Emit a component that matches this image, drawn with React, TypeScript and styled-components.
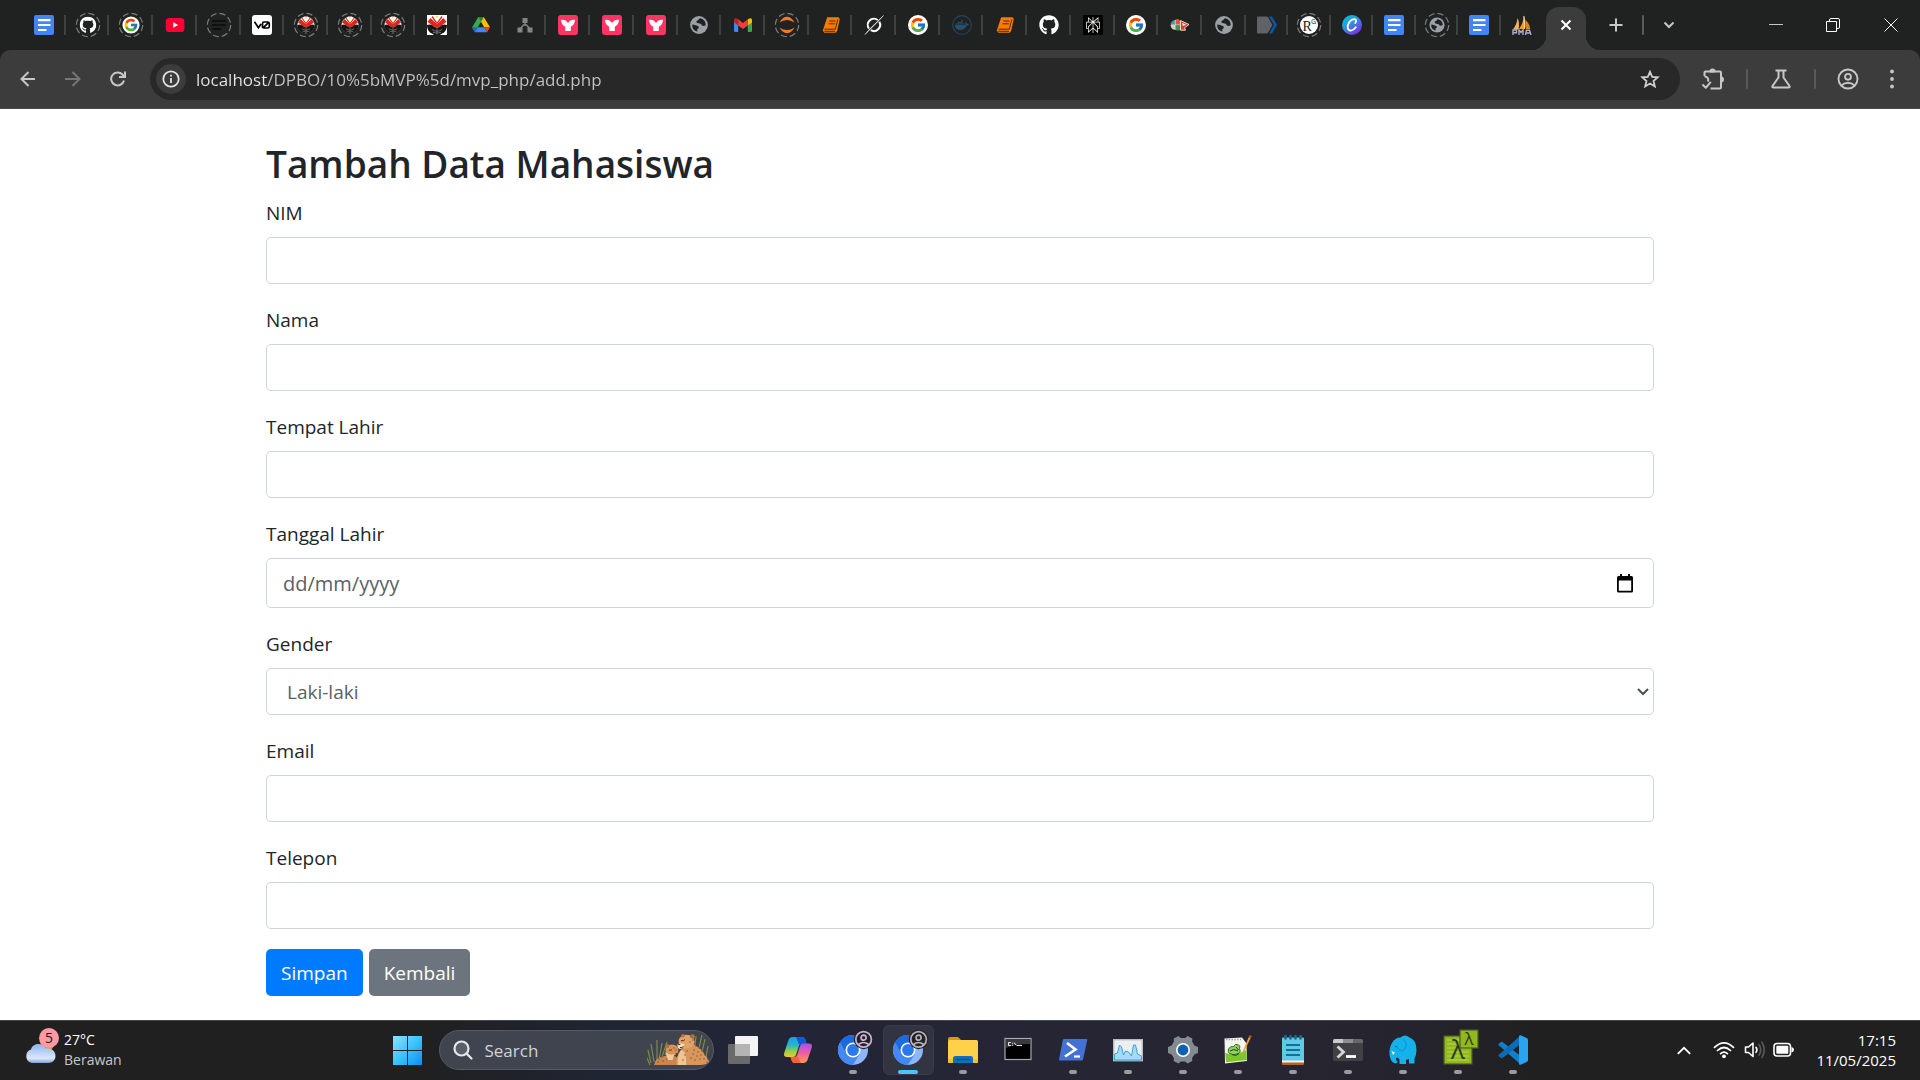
import React from "react";
import styled, { createGlobalStyle } from "styled-components";
import { FaGithub, FaDocker } from "react-icons/fa";
import { FcGoogle } from "react-icons/fc";
import { SiPerplexity } from "react-icons/si";

const GlobalStyle = createGlobalStyle`
  *, *::before, *::after { box-sizing: border-box; }
  body {
    margin: 0;
    background: #fff;
    font-family: "Open Sans", "Noto Sans", sans-serif;
  }
  button, input, select { font-family: inherit; }
  svg { display: block; flex: none; }
`;

/* ---------- layout ---------- */

const Screen = styled.div`
  display: flex;
  flex-direction: column;
  min-height: 100vh;
`;

const TabStrip = styled.header`
  display: flex;
  align-items: stretch;
  height: 50px;
  padding-left: 22px;
  background: #202221;
`;

const TabList = styled.nav`
  display: flex;
  flex: 0 1 1521px;
  min-width: 0;
`;

const Tab = styled.button<{ $grow: number; $last?: boolean }>`
  display: flex;
  flex: ${(p) => p.$grow} 1 0;
  min-width: 0;
  align-items: center;
  justify-content: center;
  height: 50px;
  padding: 0;
  border: 0;
  background: linear-gradient(${(p) => (p.$last ? "transparent, transparent" : "#3f4140, #3f4140")})
    right 15px / 2px 20px no-repeat;
`;

const ActiveTab = styled.div`
  position: relative;
  display: flex;
  align-items: center;
  justify-content: center;
  align-self: flex-end;
  width: 40px;
  height: 43px;
  margin-left: 3px;
  padding-bottom: 7px;
  border-radius: 13px 13px 0 0;
  background: #3c3c3c;

  &::before,
  &::after {
    content: "";
    position: absolute;
    bottom: 0;
    width: 14px;
    height: 14px;
  }
  &::before {
    right: 100%;
    background: radial-gradient(circle at 0 0, transparent 14px, #3c3c3c 14px);
  }
  &::after {
    left: 100%;
    background: radial-gradient(circle at 100% 0, transparent 14px, #3c3c3c 14px);
  }
`;

const IconButton = styled.button<{ $w: number; $bright?: boolean }>`
  display: flex;
  flex: none;
  align-items: center;
  justify-content: center;
  width: ${(p) => p.$w}px;
  padding: 0;
  border: 0;
  background: none;
  color: ${(p) => (p.$bright ? "#fff" : "#c7c7c7")};
`;

const NewTabArea = styled.div`
  display: flex;
  align-items: center;
  padding-left: 10px;
`;

const Divider = styled.span`
  width: 2px;
  height: 20px;
  border-radius: 1px;
  background: #5a5a5a;
`;

const WindowControls = styled.div`
  display: flex;
  align-items: center;
  margin-left: auto;
`;

const ToolbarBack = styled.div`
  background: #202221;
`;

const Toolbar = styled.div`
  display: flex;
  align-items: center;
  height: 59px;
  padding-right: 16px;
  border-bottom: 1px solid #4a4848;
  border-radius: 10px 10px 0 0;
  background: #3c3c3c;
`;

const NavButtons = styled.div`
  display: flex;
  padding-left: 5px;
  margin-right: 10px;
`;

const AddressBar = styled.div`
  display: flex;
  flex: 1;
  align-items: center;
  height: 42px;
  padding: 0 15px 0 6px;
  border-radius: 21px;
  background: #282828;
`;

const SiteInfo = styled.button`
  display: flex;
  align-items: center;
  justify-content: center;
  width: 30px;
  height: 30px;
  margin-right: 10px;
  padding: 0;
  border: 0;
  border-radius: 50%;
  background: #3c3c3c;
  color: #e3e3e3;
`;

const UrlInput = styled.input`
  flex: 1;
  min-width: 0;
  height: 30px;
  padding: 0;
  border: 0;
  outline: 0;
  background: linear-gradient(to right, #e8e8e8 71px, #c4c4c4 71px);
  background-clip: text;
  color: transparent;
  font-size: 17px;
`;

const ToolbarActions = styled.div`
  display: flex;
  align-items: center;
`;

/* ---------- page ---------- */

const Page = styled.main`
  flex: 1;
  padding-top: 31px;
`;

const Container = styled.form`
  width: 100%;
  max-width: 1426px;
  margin: 0 auto;
  padding: 0 19px 24px;
  color: #212529;
`;

const Title = styled.h2`
  margin: 0 0 10px;
  font-size: 37px;
  font-weight: 600;
  line-height: 48px;
`;

const FormGroup = styled.div`
  margin-bottom: 20px;
`;

const Label = styled.label`
  display: block;
  width: fit-content;
  margin-bottom: 9px;
  font-size: 19px;
  line-height: 30px;
`;

const Fields = styled.div`
  display: flex;
  flex-direction: column;
  gap: 1px;
`;

const ControlWrap = styled.div`
  position: relative;
`;

const Input = styled.input<{ $tall?: boolean }>`
  display: block;
  width: 100%;
  height: ${(p) => (p.$tall ? 50 : 47)}px;
  padding: 0 16px;
  border: 1px solid #ced4da;
  border-radius: 5px;
  background: #fff;
  color: #495057;
  font-size: ${(p) => (p.$tall ? 20 : 19)}px;

  &::placeholder {
    color: #5a6167;
    opacity: 1;
  }
`;

const Select = styled.select`
  display: block;
  width: 100%;
  height: 47px;
  padding: 0 20px;
  border: 1px solid #ced4da;
  border-radius: 5px;
  appearance: none;
  background: #fff;
  color: #5a6167;
  font-size: 19px;
`;

const PickerButton = styled.button`
  position: absolute;
  top: 0;
  right: 19px;
  display: flex;
  align-items: center;
  height: 100%;
  padding: 0 2px;
  border: 0;
  background: none;
  color: #000;
`;

const SelectArrow = styled.span`
  position: absolute;
  top: 0;
  right: 5px;
  display: flex;
  align-items: center;
  height: 100%;
  pointer-events: none;
`;

const Actions = styled.div`
  display: flex;
  gap: 6px;
`;

const buttonBase = `
  height: 47px;
  padding: 2px 15px 0;
  border: 0;
  border-radius: 5px;
  color: #fff;
  font-size: 19px;
  line-height: 45px;
`;

const SubmitButton = styled.button`
  ${buttonBase}
  background: #007bff;
`;

const BackLink = styled.a`
  ${buttonBase}
  background: #6c757d;
  text-decoration: none;
`;

/* ---------- taskbar ---------- */

const Taskbar = styled.footer`
  display: grid;
  grid-template-columns: 1fr auto 1fr;
  align-items: center;
  height: 60px;
  box-shadow: inset 0 1px #434747;
  background: linear-gradient(
    to right,
    #202020 22%,
    #202534 32%,
    #232536 45%,
    #272532 62%,
    #25242e 74%,
    #202020 80%
  );
`;

const Weather = styled.button`
  display: flex;
  align-items: center;
  gap: 5px;
  justify-self: start;
  padding: 0 0 0 24px;
  border: 0;
  background: none;
  color: #fff;
  font-size: 14px;
  line-height: 20px;
  text-align: left;
`;

const Muted = styled.span`
  display: block;
  color: #c8c8c8;
`;

const Apps = styled.nav`
  display: flex;
  align-items: center;
`;

const AppButton = styled.button<{ $active?: boolean }>`
  position: relative;
  display: flex;
  align-items: center;
  justify-content: center;
  width: 51px;
  height: 50px;
  margin: 0 2px;
  padding: 0;
  border: 1px solid ${(p) => (p.$active ? "#3a3c49" : "transparent")};
  border-radius: 6px;
  background: ${(p) => (p.$active ? "#323442" : "none")};
`;

const Indicator = styled.span<{ $active?: boolean }>`
  position: absolute;
  bottom: 0;
  left: 50%;
  width: ${(p) => (p.$active ? 20 : 8)}px;
  height: 4px;
  border-radius: 2px;
  background: ${(p) => (p.$active ? "#4cc2ff" : "#9a9a9f")};
  transform: translateX(-50%);
`;

const SearchBox = styled.label`
  display: flex;
  align-items: center;
  width: 275px;
  height: 40px;
  margin: 0 2px 0 4px;
  padding: 0 4px 0 13px;
  border: 1px solid #555a64;
  border-radius: 20px;
  background: #40444f;
`;

const SearchInput = styled.input`
  flex: 1;
  min-width: 0;
  padding: 0 0 0 12px;
  border: 0;
  outline: 0;
  background: none;
  color: #fff;
  font-size: 17px;
  &::placeholder {
    color: #d2d3d6;
    opacity: 1;
  }
`;

const Tray = styled.div`
  display: flex;
  align-items: center;
  justify-self: end;
  padding-right: 24px;
`;

const Clock = styled.button`
  padding: 0;
  margin-left: 14px;
  border: 0;
  background: none;
  color: #fff;
  font-size: 15px;
  line-height: 20px;
  text-align: right;
`;

/* ---------- tab icons (20 x 20) ---------- */

const Svg20 = ({ children }: { children: React.ReactNode }) => (
  <svg width="20" height="20" viewBox="0 0 20 20">{children}</svg>
);

const Ring = ({ children }: { children: React.ReactNode }) => (
  <svg width="26" height="26" viewBox="0 0 26 26">
    <circle cx="13" cy="13" r="11.7" fill="none" stroke="#777a79" strokeWidth="1.3" strokeDasharray="6.2 3" />
    {children}
  </svg>
);

const Docs = () => (
  <Svg20>
    <rect width="20" height="20" rx="2" fill="#4285f4" />
    <path d="M4 5.2h12.5M4 10h12.5M4 15h8.5" stroke="#fff" strokeWidth="2.2" />
  </Svg20>
);

const Github = () => <FaGithub size={20} color="#fff" />;
const RingGithub = () => (
  <Ring>
    <FaGithub x={4.5} y={4.5} size={17} color="#fff" />
  </Ring>
);
const Google = () => (
  <Svg20>
    <circle cx="10" cy="10" r="10" fill="#fff" />
    <FcGoogle x={1.5} y={1.5} size={17} />
  </Svg20>
);
const RingGoogle = () => (
  <Ring>
    <circle cx="13" cy="13" r="8.6" fill="#fff" />
    <FcGoogle x={5.5} y={5.5} size={15} />
  </Ring>
);
const Youtube = () => (
  <Svg20>
    <rect x=".8" y="3" width="18.6" height="14" rx="3.6" fill="#ff0033" />
    <path d="M8.2 7.2v5.6l4.9-2.8z" fill="#fff" />
  </Svg20>
);
const RingLines = () => (
  <Ring>
    <path d="M6 9h14M6 13h14M6 17h9" stroke="#0a0b0b" strokeWidth="1.6" />
  </Ring>
);
const VZero = () => (
  <Svg20>
    <rect width="20" height="20" rx="3" fill="#fff" />
    <path d="M2.5 6.8 6.4 12.8 9 9M10.5 13V8.4Q10.5 7 12 7h3.8q1.5 0 1.5 1.5v3q0 1.5-1.5 1.5H12q-1.4 0-1.4-1.2M11 12.8 17 7.2" fill="none" stroke="#000" strokeWidth="1.7" />
  </Svg20>
);
const mask = (
  <g>
    <path d="M0 10A10 10 0 0 1 3 2.800L8 0h4l5 2.800A10 10 0 0 1 20 10a10 10 0 0 1-20 0z" fill="#fff" />
    <path d="M.4 6.800 3.600 3 10 9.200 16.400 3l3.200 3.800-5.300 4L10 13l-4.300-2.200z" fill="#e1251b" />
    <path d="m5 1.500 5 6.800 5-6.800" fill="none" stroke="#e1251b" strokeWidth="1.300" />
    <path d="M8.800.8h2.400L10 3.600z" fill="#f3dd3b" />
    <path d="M0 10q4-1.500 7 1.500l3 1.500 3-1.500q3-3 7-1.500a10 10 0 0 1-4 8.200H4A10 10 0 0 1 0 10z" fill="#161616" />
    <path d="M4 17.500h12L13 20H7z" fill="#161616" />
    <path d="M5 14.500q5 3.500 10 0M6 17.300q4 1.700 8 0M10 13.500v6" fill="none" stroke="#777" strokeWidth=".9" />
  </g>
);
const RingMask = () => (
  <Ring>
    <g transform="translate(4.500 4.500) scale(.85)">{mask}</g>
  </Ring>
);
const MaskSquare = () => (
  <Svg20>
    <rect width="20" height="20" fill="#fff" />
    {mask}
  </Svg20>
);
const Drive = () => (
  <Svg20>
    <path d="M7.200 2h5.600L6.700 12.400 3.900 17.200 1 12.500z" fill="#34a853" />
    <path d="M7.200 2h5.600L19 12.300h-5.800z" fill="#fbbc04" />
    <path d="M10 6.800 7.200 2h5.600z" fill="#188038" />
    <path d="M6.700 12.300h6.600l2.900 4.900H3.900z" fill="#4285f4" />
    <path d="M13.200 12.300H19l-2.800 4.900z" fill="#ea4335" />
    <path d="M1 12.300h5.700l-2.800 4.900z" fill="#1967d2" />
  </Svg20>
);
const Network = () => (
  <Svg20>
    <path d="M10 6v4M5.500 13.500 8.500 10h3l3 3.500" fill="none" stroke="#858585" strokeWidth="1.300" />
    <path d="M7.500 3h5v5h-5zM2.500 12.500h5v5h-5zM12.500 12.500h5v5h-5z" fill="#858585" />
  </Svg20>
);
const PinkY = () => (
  <Svg20>
    <rect width="20" height="20" rx="3" fill="#ff3465" />
    <path d="M3 4.800c3-.6 5.300.6 7 3.200 1.700-2.600 4-3.800 7-3.200-.1 3.300-1.500 5.800-4.200 7V16H7.200v-4.200C4.500 10.600 3.100 8.100 3 4.800z" fill="#fff" />
  </Svg20>
);
const globe = (
  <g>
    <circle cx="10" cy="10" r="8.900" fill="#9aa0a6" />
    <path d="M11.200 3.300c-1.800.2-1.300 2.200-3.200 2.400-1 .3-.9 1.900.3 2.400 1.700.6 3.700.2 4.400 1.900.3 1.300 1.900.8 3 .7.600-.1.900-.5 1-1A6.900 6.900 0 0 0 11.200 3.300zM3.300 9.500c2.500.4 4.800 1 6.200 2.100.8.900.2 2-1.100 2.300-.5.900 0 1.900.2 2.700C5 16.200 2.800 13 3.300 9.500z" fill="#202221" />
  </g>
);
const Globe = () => <Svg20>{globe}</Svg20>;
const RingGlobe = () => (
  <Ring>
    <g transform="translate(4.500 4.500) scale(.85)">{globe}</g>
  </Ring>
);
const Gmail = () => (
  <Svg20>
    <path d="M1 5.500 5.200 8.500V17H2.300Q1 17 1 15.700z" fill="#4285f4" />
    <path d="M19 5.500 14.800 8.500V17h2.900Q19 17 19 15.700z" fill="#34a853" />
    <path d="M14.800 4.300q4.200-2.600 4.200 1v2L14.800 10.400z" fill="#fbbc04" />
    <path d="M5.200 4.300Q1 1.700 1 5.300v2l4.200 3.100z" fill="#c5221f" />
    <path d="m5.200 4.300 4.800 3.600 4.800-3.600v6.100L10 14l-4.800-3.600z" fill="#ea4335" />
  </Svg20>
);
const Jupyter = () => (
  <Ring>
    <path d="M5.500 10.500Q8.500 4.800 13 4.800T20.500 10.500Q17 8 13 8T5.500 10.500zM5.500 15.500Q8.500 21.200 13 21.200T20.500 15.500Q17 18 13 18T5.500 15.500z" fill="#f37726" />
  </Ring>
);
const Book = () => (
  <Svg20>
    <path d="M6.200 2.200H17.500L18.800 4 16.300 15.500l-1.600 2.300H3.300L1.800 15.500z" fill="#f57c00" />
    <path d="M8.200 6h6.300M7.600 8.800h6.300M3.500 14.200h10.800l2.600-9.900M3.300 16.300H14" fill="none" stroke="#3a2410" strokeWidth=".9" />
  </Svg20>
);
const Slashed = () => (
  <Svg20>
    <path d="M13.800 5A6.200 6.200 0 0 0 5 13.600M6.800 15.200A6.200 6.200 0 0 0 15.300 6.800" fill="none" stroke="#fff" strokeWidth="2" />
    <path d="M19.500.5 5.500 14.200 1 19.500 14 6.500z" fill="#fff" stroke="#fff" strokeWidth=".5" />
  </Svg20>
);
const Docker = () => (
  <Svg20>
    <circle cx="10" cy="10" r="9.300" fill="none" stroke="#24455b" strokeWidth="1.200" />
    <FaDocker x={3} y={3} size={14} color="#24506e" />
  </Svg20>
);
const Perplexity = () => (
  <Svg20>
    <rect width="20" height="20" rx="1" fill="#000" />
    <SiPerplexity x={2} y={2} size={16} color="#f3f3ee" />
  </Svg20>
);
const Brain = () => (
  <Svg20>
    <path d="M.5 9.500Q1 5.500 5 5v4.500z" fill="#3d9bb8" />
    <path d="M5 4.800q4-1.800 5 1v3.700H5z" fill="#e4572e" />
    <path d="M.5 10H5v4.800Q1 14.500.5 10z" fill="#c9d6c5" />
    <path d="M5.500 10H10v5.200q-4 1-4.500-.700z" fill="#4d8b57" />
    <path d="M10.500 5.500 19 9.500l-4.500 3.200 1 2.500h-5z" fill="#e23b2e" stroke="#f4e9dc" strokeWidth=".9" />
    <path d="m12 8 4 1.600-3 1.500z" fill="#fff" />
    <path d="M1 9.700h9M5.300 5v10" stroke="#f0e8dc" strokeWidth=".7" />
  </Svg20>
);
const Shield = () => (
  <Svg20>
    <path d="M0 2.500q0-1 1-1h8.500q1 0 1.700 1L15.500 10l-4.300 7.500q-.6 1-1.700 1H1q-1 0-1-1z" fill="#5f6368" />
    <path d="M12 1.500h3l5 8.500-5 8.500h-3L17 10z" fill="#0b57a4" />
  </Svg20>
);
const ResearchGate = () => (
  <Ring>
    <circle cx="13" cy="13" r="9" fill="#fff" />
    <text x="6.500" y="18.500" fontFamily="Liberation Serif, serif" fontSize="14" fill="#222">R</text>
    <text x="15" y="11.500" fontFamily="Open Sans, sans-serif" fontSize="7" fill="#222">G</text>
  </Ring>
);
const Canva = () => (
  <Svg20>
    <defs>
      <linearGradient id="canva" x1="0" y1="0" x2=".7" y2="1">
        <stop offset="0" stopColor="#00c4cc" />
        <stop offset=".45" stopColor="#2a9be0" />
        <stop offset="1" stopColor="#7d2ae8" />
      </linearGradient>
    </defs>
    <circle cx="10" cy="10" r="10" fill="url(#canva)" />
    <path d="M13.200 8c1.600-1.200 1.100-4-1.200-3.800C8 4.500 5.300 9 5.700 12.600c.5 4 5.100 3.900 8.100-.3" fill="none" stroke="#fff" strokeWidth="1.800" strokeLinecap="round" />
  </Svg20>
);
const Sails = () => (
  <Svg20>
    <path d="M1 14.500Q5 9 5.500 3 8 8 6.500 14.500z" fill="#f2b35e" />
    <path d="M7 14Q12 7 11.500.3 15 7 13 14z" fill="#f89c0e" />
    <path d="M13.500 5q4.500 4 4.500 9h-4z" fill="#d9831b" />
    <path d="m12 1 .5 12.500" stroke="#fff2d8" strokeWidth=".8" />
    <path d="M1 20v-5h3.500v2.700H1M7 20v-5l2 2.500 2-2.500v5M13.500 20l1-4.800h3L19 20M14 18h4.500" fill="none" stroke="#a9aecf" strokeWidth="1.400" />
  </Svg20>
);

const tabs: [string, () => React.ReactElement][] = [
  ["Docs", Docs], ["GitHub", RingGithub], ["Google", RingGoogle], ["YouTube", Youtube],
  ["Notes", RingLines], ["v0", VZero], ["Campus 1", RingMask], ["Campus 2", RingMask],
  ["Campus 3", RingMask], ["Campus 4", MaskSquare], ["Drive", Drive], ["Diagram", Network],
  ["Mockup 1", PinkY], ["Mockup 2", PinkY], ["Mockup 3", PinkY], ["Site", Globe],
  ["Gmail", Gmail], ["Jupyter", Jupyter], ["Book", Book], ["Grok", Slashed],
  ["Google search", Google], ["Docker", Docker], ["Book 2", Book], ["GitHub repo", Github],
  ["Perplexity", Perplexity], ["Google results", Google], ["Learning", Brain], ["Site 2", Globe],
  ["Tool", Shield], ["ResearchGate", ResearchGate], ["Canva", Canva], ["Docs 2", Docs],
  ["Site 3", RingGlobe], ["Docs 3", Docs], ["phpMyAdmin", Sails],
];

/* ---------- line icons ---------- */

const Line = ({ s = 20, w = 2, d }: { s?: number; w?: number; d: string }) => (
  <svg width={s} height={s} viewBox={`0 0 ${s} ${s}`} fill="none" stroke="currentColor" strokeWidth={w}>
    <path d={d} />
  </svg>
);

const PuzzleIcon = () => (
  <svg width="24" height="24" viewBox="0 0 24 24" fill="none" stroke="#c7c7c7" strokeWidth="2" strokeLinejoin="round">
    <path d="M3.500 9V5.500q0-1 1-1h14.500q1 0 1 1V20.500q0 1-1 1H9.500M3.500 9.500C6.500 9.500 8 12 6.800 14.500M1.500 17.500l3.300 3.300 5-6" />
    <path d="M9.500 4.500a2 2 0 0 1 4 0zM20 10.500a2 2 0 0 1 0 4z" fill="#c7c7c7" />
  </svg>
);
const FlaskIcon = () => (
  <svg width="20" height="20" viewBox="0 0 20 20" fill="none" stroke="#c7c7c7" strokeWidth="2" strokeLinejoin="round">
    <path d="M4.500 1.500h11M7.500 2v6.500L1.500 17q-.6 1.500 1 1.500h15q1.600 0 1-1.500l-6-8.500V2" />
  </svg>
);
const ProfileIcon = () => (
  <svg width="22" height="22" viewBox="0 0 22 22" fill="none" stroke="#c7c7c7" strokeWidth="1.900">
    <circle cx="11" cy="11" r="9.500" />
    <circle cx="11" cy="8.800" r="2.900" />
    <path d="M4.500 17.200q6.500-5 13 0" />
  </svg>
);
const DotsIcon = () => (
  <svg width="20" height="20" viewBox="0 0 20 20" fill="#c7c7c7">
    <circle cx="10" cy="2.500" r="1.900" />
    <circle cx="10" cy="10" r="1.900" />
    <circle cx="10" cy="17.500" r="1.900" />
  </svg>
);
const StarIcon = () => (
  <svg width="20" height="20" viewBox="0 0 20 20" fill="none" stroke="#d0d0d0" strokeWidth="1.800">
    <path d="m10 2.800 2.200 5 5.500.5-4.200 3.700 1.300 5.400-4.800-2.900-4.800 2.900 1.300-5.400L2.300 8.300l5.500-.5z" />
  </svg>
);
const CalendarIcon = () => (
  <svg width="16" height="19" viewBox="0 0 16 19">
    <path d="M3 0h2v2h6V0h2v2h1.500Q16 2 16 3.500V17q0 1.500-1.500 1.500h-13Q0 18.500 0 17V3.500Q0 2 1.500 2H3zM1.800 6.500v10.200h12.400V6.500z" fill="#000" fillRule="evenodd" />
  </svg>
);

/* ---------- taskbar icons (30 x 30) ---------- */

const Svg30 = ({ children }: { children: React.ReactNode }) => (
  <svg width="30" height="30" viewBox="0 0 30 30" overflow="visible">{children}</svg>
);

const WeatherIcon = () => (
  <svg width="35" height="46" viewBox="0 0 35 46">
    <defs>
      <linearGradient id="cloud" x1="0" y1="0" x2="0" y2="1">
        <stop offset="0" stopColor="#8fb3ee" />
        <stop offset=".75" stopColor="#dbe8fb" />
        <stop offset="1" stopColor="#7fa0d8" />
      </linearGradient>
    </defs>
    <circle cx="23" cy="18" r="6.500" fill="#f08a24" />
    <path d="M8 36a7 7 0 0 1-1-13.500C7.500 19.500 11 16.500 15 17c3 .2 5.500 2 6.500 4.500C27 20.500 31.500 24 31.500 29c0 4-3 7-7 7z" fill="url(#cloud)" />
    <circle cx="25" cy="11" r="10" fill="#ff99a4" />
    <text x="25" y="16" textAnchor="middle" fontSize="14" fontFamily="Open Sans, sans-serif" fill="#1a1a1a">5</text>
  </svg>
);

const StartIcon = () => (
  <svg width="29" height="29" viewBox="0 0 29 29">
    <defs>
      <linearGradient id="win" x1="0" y1="0" x2="1" y2="1">
        <stop offset="0" stopColor="#8ae2ff" />
        <stop offset=".5" stopColor="#3cc3fb" />
        <stop offset="1" stopColor="#0a8df5" />
      </linearGradient>
    </defs>
    <path d="M0 0h14v14H0zM15 0h14v14H15zM0 15h14v14H0zM15 15h14v14H15z" fill="url(#win)" />
  </svg>
);

const SearchIcon = () => (
  <svg width="20" height="20" viewBox="0 0 20 20" fill="none" stroke="#e6e7ea" strokeWidth="2.200" strokeLinecap="round">
    <circle cx="8.500" cy="8.500" r="7" fill="#5b5f69" />
    <path d="m13.600 13.600 4.900 4.900" />
  </svg>
);

const spots = [
  [49, 13], [52, 15], [47, 17], [51, 19], [55, 18], [46, 21], [50, 23], [54, 22], [58, 22], [53, 26],
  [57, 26], [48, 27], [44, 25], [61, 26], [43, 9], [46, 7], [44, 4], [12, 26], [15, 24], [11, 29],
  [16, 28], [20, 26], [27, 15], [29, 17], [40, 18], [38, 22], [36, 27], [60, 29],
];

const CheetahArt = () => (
  <svg width="62" height="34" viewBox="0 0 62 34">
    <path d="M4 30 1 17M7 29 4 11M10 28V7M12 27l3-17M15 24l5-15M3 32l-3-7M48 12l1-9M52 15l3-13M55 19l3-13M59 24l2-11M18 22l4-10" stroke="#7f8a4c" strokeWidth="1.200" fill="none" />
    <path d="M7 32q1-8 11-9l6-2 7 4 1 7z" fill="#c98650" />
    <path d="M29 32q0-10 5-15l5-5 7-1q8 4 12 11 4 5 4 7-3 3-9 3z" fill="#d8975f" />
    <path d="M34 17q6 1 5 15h-8q-1-9 3-15z" fill="#efc596" />
    <ellipse cx="25" cy="17" rx="6.500" ry="5.500" fill="#d8935a" />
    <circle cx="20.500" cy="13" r="1.900" fill="#b06e3d" />
    <path d="M18.500 19q4 4 9 2l-2 6h-5z" fill="#f0cba0" />
    <ellipse cx="39.500" cy="8.500" rx="8" ry="6.800" fill="#e0a46b" />
    <circle cx="36" cy="2.700" r="1.800" fill="#b8753f" />
    <circle cx="45.500" cy="3.500" r="2.200" fill="#b8753f" />
    <path d="M30.500 11q4-1 7 .5-1 4.500-5 4.500-2.500-1-2-5z" fill="#f6dcb8" />
    <path d="M34 7.500q2.500 1 4-1M30.800 11.500h2.500M33 14.500q2 .500 3.500-1M22 17q1.500 1 3-.5M29 20l1.500 2.500" stroke="#5e3018" strokeWidth="1" fill="none" />
    <g fill="#80451f">
      {spots.map(([x, y]) => (
        <circle key={`${x}-${y}`} cx={x} cy={y} r=".7" />
      ))}
    </g>
  </svg>
);

const TaskViewIcon = () => (
  <Svg30>
    <rect x="7" y="1" width="23" height="20" rx="1" fill="#f4f4f4" />
    <rect x="0" y="9" width="22" height="20" rx="1" fill="#6a6a6a" />
    <rect x="7" y="9" width="15" height="12" fill="#b4b4b4" />
  </Svg30>
);

const CopilotIcon = () => (
  <Svg30>
    <defs>
      <linearGradient id="cpA" x1="0" y1="0" x2="0" y2="1">
        <stop offset="0" stopColor="#1e9bf0" />
        <stop offset=".4" stopColor="#21b8c8" />
        <stop offset=".7" stopColor="#8fcf4a" />
        <stop offset="1" stopColor="#f5c52c" />
      </linearGradient>
      <linearGradient id="cpB" x1="0" y1="0" x2="0" y2="1">
        <stop offset="0" stopColor="#a94df0" />
        <stop offset=".5" stopColor="#ee5fa0" />
        <stop offset="1" stopColor="#ff9c50" />
      </linearGradient>
    </defs>
    <path d="M10 2h9q2.500 0 3.300 2.500L23.500 9h-5q-2 0-2.600 2L13 20q-.8 2-3 2H4q-3.800 0-2.800-4L5.500 5Q6.600 2 10 2z" fill="url(#cpA)" />
    <path d="M13 2h6q2.500 0 3.300 2.500L23.500 9h-5q-2 0-2.300 1z" fill="#1558d6" />
    <path d="M20 28h-8q-2.500 0-3.300-2.500L7.500 22h4q2 0 2.600-2L17 11q.8-2.500 3-2.500h6q3.800 0 2.800 4L24.500 25Q23.400 28 20 28z" fill="url(#cpB)" />
    <path d="M18 28h-6q-2.500 0-3.300-2.500L7.500 22h4q2 0 2.600-1.500z" fill="#f2603c" />
  </Svg30>
);

const ChromiumIcon = ({ tone }: { tone: string }) => (
  <Svg30>
    <circle cx="15" cy="15" r="15" fill="#8db7fb" />
    <path d="M15 15 2 7.500A15 15 0 0 1 28 7.500z" fill="#1b6ae0" />
    <path d="M2 7.500A15 15 0 0 0 15 30l7-11.500L9 18.500z" fill="#4688f1" />
    <path d="M15 7.500h13A15 15 0 0 0 2 7.500l6.500 11z" fill="#1b6ae0" />
    <circle cx="15" cy="15" r="7.500" fill="#fff" />
    <circle cx="15" cy="15" r="5.900" fill="#2b78ec" />
    <circle cx="25.600" cy="4.400" r="9.800" fill="#25212b" />
    <g fill="none" stroke={tone} strokeWidth="1.700">
      <circle cx="25.600" cy="4.400" r="7.800" />
      <circle cx="25.600" cy="2.700" r="2.500" />
      <path d="M20.500 9.500q5-4 10.200 0" />
    </g>
  </Svg30>
);

const FolderIcon = () => (
  <Svg30>
    <path d="M0 4q0-2 2-2h8l4 4H0z" fill="#d9980e" />
    <rect y="5" width="30" height="23" rx="1.500" fill="#ffd04a" />
    <path d="M0 24h30v2.500q0 1.500-1.500 1.500h-27Q0 28 0 26.500z" fill="#fbc02d" />
    <path d="M5 28v-4.500Q5 21 7.500 21h15q2.500 0 2.500 2.500V28z" fill="#0f6fb8" />
    <path d="M8.500 24.500h13" stroke="#0a4c86" strokeWidth="1.200" />
  </Svg30>
);

const CmdIcon = () => (
  <Svg30>
    <rect x="2" y="3.500" width="26" height="21" fill="#000" stroke="#a9a9ad" strokeWidth="1.200" />
    <path d="M3 4h24v5Q12 9 3 13z" fill="#3a3a3c" />
    <path d="M7.800 7.500H5.500v3h2.300M9.500 7.800v.8M9.500 9.800v.8M11 7.500l2.500 3M14 10.500h5" fill="none" stroke="#ededed" strokeWidth="1" />
  </Svg30>
);

const PowerShellIcon = () => (
  <Svg30>
    <path d="M6 4h22.500q1 0 .8 1L25 24.500q-.3 1-1.300 1H2q-1.200 0-1-1L4.800 5q.2-1 1.200-1z" fill="#4472d4" />
    <path d="m9 8 8.500 6.500L7 21.500" fill="none" stroke="#fff" strokeWidth="2.600" />
    <path d="M16 21.500h6" stroke="#fff" strokeWidth="2.200" />
  </Svg30>
);

const PerfIcon = () => (
  <Svg30>
    <rect x=".7" y="4.700" width="28.600" height="21" fill="#eceef0" stroke="#b9bcc0" strokeWidth="1.400" />
    <path d="M1.500 25V19l3-1 2-8 2 2 2 8 2-4 3 1 3 4 2-11 2 0 2 9 4 2v4z" fill="#a4dcf8" stroke="#3aa2dc" strokeWidth="1" />
  </Svg30>
);

const GearIcon = () => (
  <Svg30>
    <path d="m10.500 1 2.200 2h4.600l2.200-2 4.800 2.600-.2 3 2.300 4 3.600 1.400v6l-3.600 1.400-2.300 3.600.2 3-4.800 2.600-2.400-2h-4.200l-2.400 2L5.700 26l.2-3-2.300-3.600L0 18v-6l3.600-1.400 2.300-4-.2-3z" fill="#838a92" />
    <circle cx="15" cy="15" r="7" fill="#fff" />
    <circle cx="15" cy="15" r="5.400" fill="#0b62ae" />
  </Svg30>
);

const NotepadPPIcon = () => (
  <Svg30>
    <path d="M1.500 3.500 19 2.500l4.500 6L24 26 2 28.500z" fill="#f4f4f0" />
    <path d="M2.200 18Q12 21 23.300 15l.5 10L3 27.200z" fill="#7cc52f" />
    <path d="M5.500 14q1.500-3 5-2.500 2-3.500 5-1.500 2.500 1 1 3.500 2 3-1 5-4.500 2.500-9 0-2-1.500-1-4.500z" fill="#8fcf63" stroke="#3b6f24" strokeWidth="1" />
    <path d="M7 16q4-3 8 0M9 19.500q4 2.500 7-1M13 12l2.500 3" stroke="#26461a" strokeWidth="1" fill="none" />
    <path d="M3 4.500h15" stroke="#999" strokeWidth="1.500" strokeDasharray="1.300 1.500" />
    <path d="m28.500 1-7.500 16-1.500 3 .3-4L26.500.5z" fill="#eba42c" />
    <path d="M26.700.5 28.500 1l-1 2.200-1.900-.8z" fill="#c64b36" />
  </Svg30>
);

const NotepadIcon = () => (
  <Svg30>
    <rect x="4" y="26" width="22" height="4" rx="1" fill="#b8621b" />
    <rect x="4" y="25" width="22" height="2.500" fill="#eef4f6" />
    <rect x="4" y="2.500" width="22" height="23" rx="1" fill="#62c9e4" />
    <path d="M8 10h14M8 15h14M8 20h14" stroke="#11719a" strokeWidth="1.800" />
    <path d="M7.500 1v2.500M12.500 1v2.500M17.500 1v2.500M22.500 1v2.500" stroke="#176b8c" strokeWidth="2.600" strokeLinecap="round" />
  </Svg30>
);

const TerminalIcon = () => (
  <Svg30>
    <path d="M0 5.500Q0 4 1.500 4H10v4H0z" fill="#c9c9cc" />
    <path d="M10 4h10v4H10z" fill="#8e8e92" />
    <path d="M20 4h8.500Q30 4 30 5.500V8H20z" fill="#68686c" />
    <path d="M0 8h30v16.500q0 1.500-1.500 1.500h-27Q0 26 0 24.500z" fill="#414143" />
    <path d="m4.500 11.500 6 5.500-6 5.500" fill="none" stroke="#d6d6d8" strokeWidth="2.800" />
    <path d="M13 21.500h10" stroke="#fff" strokeWidth="2.800" />
  </Svg30>
);

const ElephantIcon = () => (
  <Svg30>
    <path d="M4 8Q7 2.500 12.500 2.500 17-1.500 21.500 2.500 28.500 5 28.500 15q0 5-2 8v5.500h-5.500V24q-1.500.7-3 .7v4.300h-6.500V24.500q-1.200-.5-1.500-2l-2 .5q-.3 3 2 3.500-1 2.500-4 1.500Q2 26 1.500 19 1 13 4 8z" fill="#14b1eb" />
    <path d="M14.500 4q4.500 2.500 3.500 7.500-1 4-4.500 4.500-3-1-4.500-4" fill="none" stroke="#0a93cf" strokeWidth="1" />
    <circle cx="8" cy="11.500" r=".8" fill="#06587e" />
    <path d="m3.500 16 3.500 1.500-2 2.500z" fill="#fff" />
  </Svg30>
);

const LambdaIcon = () => (
  <Svg30>
    <rect x="1" y="1" width="28" height="28" fill="#8fb91d" stroke="#4d5b2a" strokeWidth="1.200" />
    <path d="M4 5h22M4 9h22M4 13h22M4 17h22M4 21h22M4 25h22" stroke="#b9d65e" strokeWidth="1.100" />
    <text x="15" y="24" textAnchor="middle" fontSize="26" fontFamily="Open Sans, sans-serif" fill="#2f3a1c">λ</text>
    <rect x="17" y="-5" width="18" height="18" fill="#8fb91d" stroke="#4d5b2a" strokeWidth="1.200" />
    <text x="26" y="10" textAnchor="middle" fontSize="17" fontFamily="Open Sans, sans-serif" fill="#2f3a1c">λ</text>
  </Svg30>
);

const VsCodeIcon = () => (
  <Svg30>
    <path d="M1 8.500 3 7q.8-.4 1.500.1L22 20.500V29L.8 10.200Q0 9.300 1 8.500z" fill="#0f80cc" />
    <path d="M1 21.500 3 23q.8.400 1.500-.1L22 9.500V1L.8 19.800q-.8.900.200 1.700z" fill="#0a6cb5" />
    <path d="M21 .8q.9-.8 1.800-.5L28.600 3q1.400.7 1.400 2v20q0 1.300-1.400 2l-5.800 2.700q-.9.300-1.800-.5z" fill="#2ba3f3" />
  </Svg30>
);

const apps: [string, React.ReactElement, "none" | "open" | "active"][] = [
  ["Task view", <TaskViewIcon />, "none"],
  ["Copilot", <CopilotIcon />, "none"],
  ["Chromium", <ChromiumIcon tone="#c9b4d2" />, "open"],
  ["Chromium guest", <ChromiumIcon tone="#b5b5b5" />, "active"],
  ["File Explorer", <FolderIcon />, "open"],
  ["Command Prompt", <CmdIcon />, "none"],
  ["PowerShell", <PowerShellIcon />, "open"],
  ["Task Manager", <PerfIcon />, "open"],
  ["Settings", <GearIcon />, "open"],
  ["Notepad++", <NotepadPPIcon />, "open"],
  ["Notepad", <NotepadIcon />, "open"],
  ["Terminal", <TerminalIcon />, "open"],
  ["Laragon", <ElephantIcon />, "open"],
  ["Lambda", <LambdaIcon />, "open"],
  ["Visual Studio Code", <VsCodeIcon />, "open"],
];

const WifiIcon = () => (
  <svg width="22" height="18" viewBox="0 0 22 18" fill="none" stroke="#fff" strokeWidth="1.700" strokeLinecap="round">
    <path d="M1.500 6.300q9.500-9 19 0M4.500 9.500q6.500-6 13 0M7.600 12.600q3.400-3 6.800 0" />
    <circle cx="11" cy="15.300" r="1.900" fill="#fff" stroke="none" />
  </svg>
);
const VolumeIcon = () => (
  <svg width="22" height="20" viewBox="0 0 22 20" fill="none" stroke="#fff" strokeWidth="1.600" strokeLinejoin="round" strokeLinecap="round">
    <path d="M1.500 7v5.500h3L9 16.500V3L4.500 7z" />
    <path d="M12 7.300q1.800 2.500 0 5" />
    <path d="M15 4.500q3.500 5.300 0 10.600M18 2.300q4.500 7.500 0 15" stroke="#5a5a5a" />
  </svg>
);
const BatteryIcon = () => (
  <svg width="22" height="16" viewBox="0 0 22 16">
    <rect x="1" y="1.500" width="16.500" height="12.500" rx="3" fill="none" stroke="#fff" strokeWidth="1.600" />
    <rect x="3.300" y="3.800" width="12" height="8" rx="1" fill="#fff" />
    <path d="M18.500 5q2.500.5 2.500 2.800t-2.500 2.700z" fill="#fff" />
  </svg>
);

/* ---------- app ---------- */

function TextField({ id, label, type = "text" }: { id: string; label: string; type?: string }) {
  return (
    <FormGroup>
      <Label htmlFor={id}>{label}</Label>
      <Input id={id} name={id} type={type} />
    </FormGroup>
  );
}

export default function App() {
  return (
    <Screen>
      <GlobalStyle />
      <TabStrip>
        <TabList aria-label="Tabs">
          {tabs.map(([name, Icon], i) => (
            <Tab key={name} aria-label={name} $grow={i < 28 ? 437 : 425} $last={i === tabs.length - 1}>
              <Icon />
            </Tab>
          ))}
        </TabList>
        <ActiveTab>
          <IconButton $w={20} aria-label="Close tab" $bright>
            <Line s={12} w={2} d="m1.500 1.500 9 9M10.500 1.500l-9 9" />
          </IconButton>
        </ActiveTab>
        <NewTabArea>
          <IconButton $w={40} aria-label="New tab">
            <Line s={14} w={2} d="M7 .5v13M.5 7h13" />
          </IconButton>
          <IconButton as="span" $w={14}>
            <Divider />
          </IconButton>
          <IconButton $w={38} aria-label="Search tabs">
            <Line s={12} w={2} d="m1.500 3.500 4.500 4.500 4.500-4.500" />
          </IconButton>
        </NewTabArea>
        <WindowControls>
          <IconButton $w={56} aria-label="Minimize">
            <Line s={14} w={1} d="M0 6.500h14" />
          </IconButton>
          <IconButton $w={58} aria-label="Restore" $bright>
            <Line s={14} w={1} d="M.5 3.500h10v10h-10zM3.500 3V2q0-1.500 1.500-1.500h7q1.500 0 1.500 1.500v7q0 1.500-1.500 1.500h-1" />
          </IconButton>
          <IconButton $w={58} aria-label="Close" $bright>
            <Line s={14} w={1} d="m.5.5 13 13M13.500.5l-13 13" />
          </IconButton>
        </WindowControls>
      </TabStrip>

      <ToolbarBack>
        <Toolbar>
          <NavButtons>
            <IconButton $w={45} aria-label="Back">
              <Line s={16} d="M15 8H2M8.500 1 1.500 8l7 7" />
            </IconButton>
            <IconButton $w={45} aria-label="Forward" disabled>
              <svg width="16" height="16" viewBox="0 0 16 16" fill="none" stroke="#757575" strokeWidth="2">
                <path d="M0 8h14M7.500 1l7 7-7 7" />
              </svg>
            </IconButton>
            <IconButton $w={45} aria-label="Reload">
              <Line s={16} d="M14 9.500A6.500 6.500 0 1 1 12.500 3.500L15 6M15 .5V6H9" />
            </IconButton>
          </NavButtons>
          <AddressBar>
            <SiteInfo aria-label="Site information">
              <svg width="18" height="18" viewBox="0 0 18 18" fill="none" stroke="currentColor" strokeWidth="1.800">
                <circle cx="9" cy="9" r="7.700" />
                <path d="M9 8v5M9 4.800v1.800" />
              </svg>
            </SiteInfo>
            <UrlInput aria-label="Address" defaultValue="localhost/DPBO/10%5bMVP%5d/mvp_php/add.php" spellCheck={false} />
            <IconButton $w={30} aria-label="Bookmark">
              <StarIcon />
            </IconButton>
          </AddressBar>
          <ToolbarActions>
            <IconButton $w={66} aria-label="Extensions"><PuzzleIcon /></IconButton>
            <Divider />
            <IconButton $w={66} aria-label="Labs"><FlaskIcon /></IconButton>
            <Divider />
            <IconButton $w={64} aria-label="Profile"><ProfileIcon /></IconButton>
            <IconButton $w={24} aria-label="Menu"><DotsIcon /></IconButton>
          </ToolbarActions>
        </Toolbar>
      </ToolbarBack>

      <Page>
        <Container onSubmit={(e) => e.preventDefault()}>
          <Title>Tambah Data Mahasiswa</Title>
          <TextField id="nim" label="NIM" />
          <Fields>
            <span />
            <TextField id="nama" label="Nama" />
            <TextField id="tempat" label="Tempat Lahir" />
            <FormGroup>
              <Label htmlFor="tl">Tanggal Lahir</Label>
              <ControlWrap>
                <Input id="tl" name="tl" $tall placeholder="dd/mm/yyyy" />
                <PickerButton type="button" aria-label="Open calendar">
                  <CalendarIcon />
                </PickerButton>
              </ControlWrap>
            </FormGroup>
            <FormGroup>
              <Label htmlFor="gender">Gender</Label>
              <ControlWrap>
                <Select id="gender" name="gender" defaultValue="Laki-laki">
                  <option>Laki-laki</option>
                  <option>Perempuan</option>
                </Select>
                <SelectArrow>
                  <svg width="12" height="8" viewBox="0 0 12 8" fill="none" stroke="#495057" strokeWidth="2">
                    <path d="m1 1 5 5 5-5" />
                  </svg>
                </SelectArrow>
              </ControlWrap>
            </FormGroup>
            <TextField id="email" label="Email" type="email" />
            <TextField id="telp" label="Telepon" />
          </Fields>
          <Actions>
            <SubmitButton type="submit">Simpan</SubmitButton>
            <BackLink href="#">Kembali</BackLink>
          </Actions>
        </Container>
      </Page>

      <Taskbar>
        <Weather>
          <WeatherIcon />
          <span>
            27°C
            <Muted>Berawan</Muted>
          </span>
        </Weather>
        <Apps aria-label="Taskbar">
          <AppButton aria-label="Start">
            <StartIcon />
          </AppButton>
          <SearchBox>
            <SearchIcon />
            <SearchInput type="text" placeholder="Search" aria-label="Search" />
            <CheetahArt />
          </SearchBox>
          {apps.map(([name, icon, state]) => (
            <AppButton key={name} aria-label={name} $active={state === "active"}>
              {icon}
              {state !== "none" && <Indicator $active={state === "active"} />}
            </AppButton>
          ))}
        </Apps>
        <Tray>
          <IconButton $w={40} aria-label="Show hidden icons">
            <svg width="14" height="9" viewBox="0 0 14 9" fill="none" stroke="#fff" strokeWidth="1.800">
              <path d="m.8 7.800 6.200-6 6.200 6" />
            </svg>
          </IconButton>
          <IconButton $w={40} aria-label="Wi-Fi"><WifiIcon /></IconButton>
          <IconButton $w={22} aria-label="Volume"><VolumeIcon /></IconButton>
          <IconButton $w={36} aria-label="Battery"><BatteryIcon /></IconButton>
          <Clock>
            17:15
            <br />
            11/05/2025
          </Clock>
        </Tray>
      </Taskbar>
    </Screen>
  );
}
